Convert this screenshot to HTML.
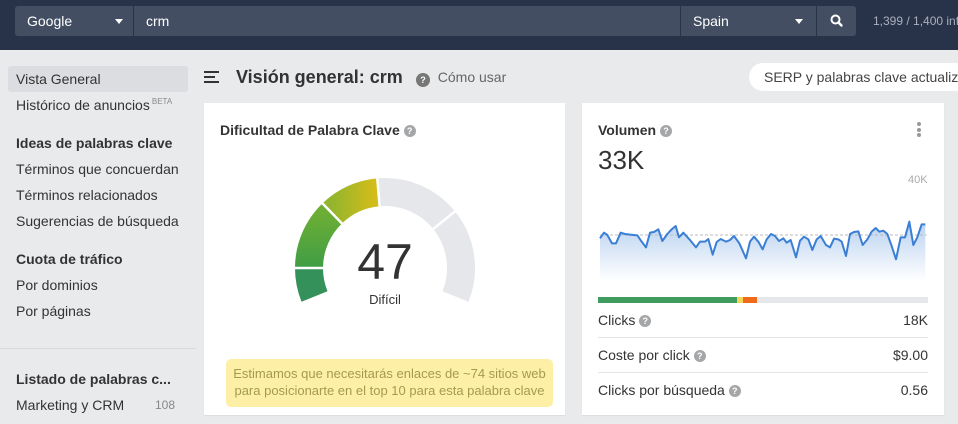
<!DOCTYPE html>
<html><head><meta charset="utf-8"><style>
*{box-sizing:border-box;margin:0;padding:0}
body{width:958px;height:424px;overflow:hidden;background:#e9eaec;font-family:"Liberation Sans",Arial,sans-serif;color:#333;position:relative}
.top{position:absolute;left:0;top:0;width:958px;height:50px;background:#283349}
.f{position:absolute;top:6px;height:30px;background:#434e63;color:#fff;font-size:14px;line-height:30px;padding-left:12px}
.car{position:absolute;width:0;height:0;border-left:4px solid transparent;border-right:4px solid transparent;border-top:5px solid #fff;top:13px}
.abs{position:absolute;white-space:nowrap}
.side{font-size:14px;color:#333}
.hb{font-weight:bold}
.card{position:absolute;background:#fff;top:103px;height:312px;box-shadow:0 1px 1px rgba(0,0,0,.06)}
.q{display:inline-block;width:12px;height:12px;border-radius:50%;background:#a5a6a8;color:#fff;font-size:9px;font-weight:bold;line-height:12px;text-align:center;vertical-align:1px}
.row{position:absolute;left:16px;right:16px;font-size:14px;color:#333}
.row span.v{position:absolute;right:0}
.hr{position:absolute;left:16px;right:16px;height:1px;background:#e5e5e7}
</style></head><body>
<div class="top">
 <div class="f" style="left:15px;width:118px;border-radius:3px 0 0 3px">Google<div class="car" style="left:100px"></div></div>
 <div class="f" style="left:134px;width:546px">crm</div>
 <div class="f" style="left:681px;width:135px">Spain<div class="car" style="left:114px"></div></div>
 <div class="f" style="left:817px;width:39px;padding:0;border-radius:0 3px 3px 0">
  <svg width="39" height="30"><circle cx="18.5" cy="13.5" r="4" fill="none" stroke="#fff" stroke-width="2"/><line x1="21.5" y1="16.5" x2="24.5" y2="19.5" stroke="#fff" stroke-width="2.4" stroke-linecap="round"/></svg></div>
 <div class="abs" style="left:873px;top:14px;font-size:12px;color:#aab0bc">1,399 / 1,400 inf</div>
</div>

<div class="abs" style="left:8px;top:66px;width:180px;height:26px;background:#dcdde0;border-radius:3px"></div>
<div class="abs side" style="left:16px;top:71px">Vista General</div>
<div class="abs side" style="left:16px;top:97px">Histórico de anuncios<sup style="font-size:8px;color:#888;vertical-align:6px;margin-left:2px">BETA</sup></div>
<div class="abs side hb" style="left:16px;top:135px">Ideas de palabras clave</div>
<div class="abs side" style="left:16px;top:161px">Términos que concuerdan</div>
<div class="abs side" style="left:16px;top:187px">Términos relacionados</div>
<div class="abs side" style="left:16px;top:213px">Sugerencias de búsqueda</div>
<div class="abs side hb" style="left:16px;top:251px">Cuota de tráfico</div>
<div class="abs side" style="left:16px;top:277px">Por dominios</div>
<div class="abs side" style="left:16px;top:303px">Por páginas</div>
<div class="abs" style="left:0;top:348px;width:196px;height:1px;background:#d8d9dc"></div>
<div class="abs side hb" style="left:16px;top:371px">Listado de palabras c...</div>
<div class="abs side" style="left:16px;top:397px">Marketing y CRM</div>
<div class="abs" style="left:155px;top:398px;font-size:12px;color:#888">108</div>

<svg class="abs" style="left:204px;top:70px" width="16" height="14"><rect x="0" y="1" width="15" height="2" fill="#333"/><rect x="0" y="6" width="11" height="2" fill="#333"/><rect x="0" y="11" width="15" height="2" fill="#333"/></svg>
<div class="abs" style="left:236px;top:67px;font-size:18px;font-weight:bold;color:#333">Visión general: crm</div>
<div class="abs" style="left:416px;top:69px;font-size:14px;color:#666"><span class="q" style="width:14px;height:14px;line-height:14px;background:#777;vertical-align:-1px">?</span>&nbsp; Cómo usar</div>
<div class="abs" style="left:749px;top:63px;width:230px;height:28px;background:#fff;border-radius:14px;font-size:14px;color:#444;line-height:28px;padding-left:15px">SERP y palabras clave actualiz</div>

<div class="card" style="left:204px;width:361px">
 <div class="abs" style="left:16px;top:19px;font-size:14px;font-weight:bold;color:#333">Dificultad de Palabra Clave <span class="q">?</span></div>
 <div class="abs" style="left:22px;top:256px;width:327px;height:48px;background:#fdf0a6;border-radius:5px;color:#a39a50;font-size:13px;line-height:17px;text-align:center;padding-top:6px">Estimamos que necesitarás enlaces de ~74 sitios web<br>para posicionarte en el top 10 para esta palabra clave</div>
</div>
<svg class="abs" style="left:0;top:0" width="958" height="424">
 <defs><linearGradient id="g3" x1="0" y1="0" x2="1" y2="0"><stop offset="0" stop-color="#93b52d"/><stop offset="1" stop-color="#d8bd17"/></linearGradient>
 <linearGradient id="g2" x1="0" y1="0" x2="0" y2="1"><stop offset="0" stop-color="#6cae35"/><stop offset="1" stop-color="#3f9d45"/></linearGradient></defs>
 <g fill="none" stroke-width="28">
  <path d="M314.5,296.5 A76,76 0 0 1 309,268" stroke="#34915a"/>
  <path d="M309,268 A76,76 0 0 1 332.2,213.4" stroke="url(#g2)"/>
  <path d="M332.2,213.4 A76,76 0 0 1 378.4,192.3" stroke="url(#g3)"/>
  <path d="M378.4,192.3 A76,76 0 0 1 444.1,220.2" stroke="#e6e7ea"/>
  <path d="M444.1,220.2 A76,76 0 0 1 455.5,296.5" stroke="#e6e7ea"/>
 </g>
 <g stroke="#fff" stroke-width="2.5">
  <line x1="324" y1="268" x2="292" y2="268"/>
  <line x1="342.6" y1="224.1" x2="320.4" y2="201.2"/>
  <line x1="379.7" y1="207.2" x2="377" y2="175"/>
  <line x1="432.4" y1="229.6" x2="457" y2="209.8"/>
 </g>
 <text x="385" y="279" text-anchor="middle" font-family="Liberation Sans" font-size="50" fill="#333">47</text>
 <text x="385" y="304" text-anchor="middle" font-family="Liberation Sans" font-size="13" fill="#333">Difícil</text>
</svg>

<div class="card" style="left:582px;width:362px">
 <div class="abs" style="left:16px;top:19px;font-size:14px;font-weight:bold;color:#333">Volumen <span class="q">?</span></div>
 <div class="abs" style="left:335px;top:19px;width:4px"><div style="width:4px;height:4px;border-radius:2px;background:#999;margin-bottom:1.5px"></div><div style="width:4px;height:4px;border-radius:2px;background:#999;margin-bottom:1.5px"></div><div style="width:4px;height:4px;border-radius:2px;background:#999"></div></div>
 <div class="abs" style="left:16px;top:42px;font-size:26px;color:#333">33K</div>
 <div class="abs" style="left:326px;top:71px;font-size:11px;color:#aaa">40K</div>
 <div class="abs" style="left:16px;top:194px;width:330px;height:6px;background:#e6e7ea"></div>
 <div class="abs" style="left:16px;top:194px;width:139px;height:6px;background:#3f9c5e"></div>
 <div class="abs" style="left:155px;top:194px;width:6px;height:6px;background:#f5d45a"></div>
 <div class="abs" style="left:161px;top:194px;width:14px;height:6px;background:#f06a1c"></div>
 <div class="row" style="top:209px">Clicks <span class="q">?</span><span class="v">18K</span></div>
 <div class="hr" style="top:234px"></div>
 <div class="row" style="top:244px">Coste por click <span class="q">?</span><span class="v">$9.00</span></div>
 <div class="hr" style="top:269px"></div>
 <div class="row" style="top:279px">Clicks por búsqueda <span class="q">?</span><span class="v">0.56</span></div>
</div>
<svg class="abs" style="left:580px;top:160px" width="378" height="150" viewBox="0 0 1134 450">
 <defs><linearGradient id="ar" x1="0" y1="0" x2="0" y2="1"><stop offset="0" stop-color="#b9d2f0"/><stop offset="1" stop-color="#ffffff"/></linearGradient></defs>
 <path d="M60,235 L72,218 L82,225 L96,250 L108,250 L122,218 L135,222 L150,224 L172,226 L185,245 L198,262 L210,218 L222,216 L235,208 L247,243 L262,222 L275,208 L287,198 L297,232 L310,218 L330,240 L348,262 L360,245 L375,245 L385,237 L398,284 L410,246 L422,237 L438,245 L450,240 L462,228 L478,250 L498,295 L510,245 L522,230 L535,245 L548,268 L560,238 L573,222 L585,228 L597,243 L610,235 L620,248 L632,240 L648,292 L660,242 L672,230 L685,238 L697,270 L710,238 L722,228 L738,255 L750,262 L762,236 L775,238 L785,245 L798,288 L810,222 L822,216 L835,214 L848,255 L862,238 L875,215 L887,204 L898,215 L910,212 L922,222 L935,258 L948,298 L962,232 L975,232 L988,185 L1000,255 L1012,232 L1025,193 L1036,193 L1036,365 L60,365 Z" fill="url(#ar)"/>
 <line x1="60" y1="225" x2="1040" y2="225" stroke="#bbb" stroke-width="3" stroke-dasharray="9,6"/>
 <path d="M60,235 L72,218 L82,225 L96,250 L108,250 L122,218 L135,222 L150,224 L172,226 L185,245 L198,262 L210,218 L222,216 L235,208 L247,243 L262,222 L275,208 L287,198 L297,232 L310,218 L330,240 L348,262 L360,245 L375,245 L385,237 L398,284 L410,246 L422,237 L438,245 L450,240 L462,228 L478,250 L498,295 L510,245 L522,230 L535,245 L548,268 L560,238 L573,222 L585,228 L597,243 L610,235 L620,248 L632,240 L648,292 L660,242 L672,230 L685,238 L697,270 L710,238 L722,228 L738,255 L750,262 L762,236 L775,238 L785,245 L798,288 L810,222 L822,216 L835,214 L848,255 L862,238 L875,215 L887,204 L898,215 L910,212 L922,222 L935,258 L948,298 L962,232 L975,232 L988,185 L1000,255 L1012,232 L1025,193 L1036,193" fill="none" stroke="#3a7fd5" stroke-width="6" stroke-linejoin="round"/>
</svg>
</body></html>
